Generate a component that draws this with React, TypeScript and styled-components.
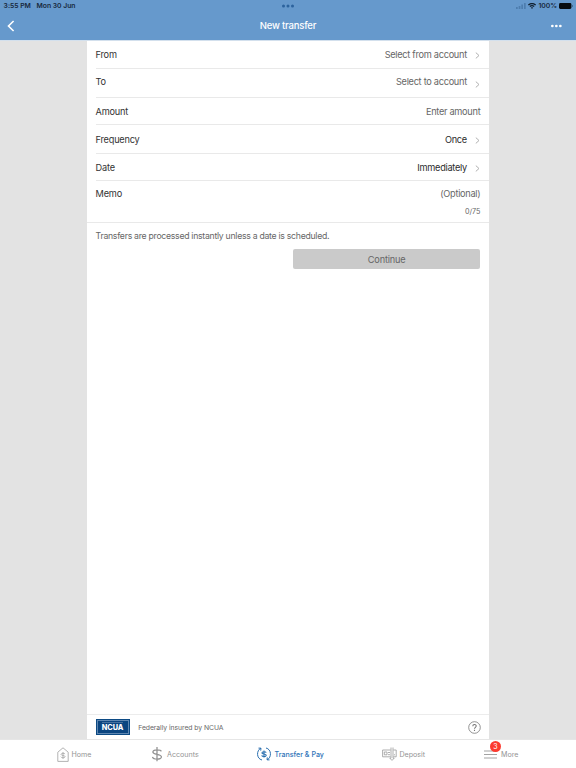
import React from "react";
import styled, { createGlobalStyle } from "styled-components";

const GlobalStyle = createGlobalStyle`
  * { box-sizing: border-box; }
  body { margin: 0; background: #e3e3e3; font-family: Inter, "Liberation Sans", sans-serif; }
  svg { display: block; flex: none; }
`;

const Screen = styled.div`
  width: 576px;
  height: 768px;
  display: flex;
  flex-direction: column;
  background: #e3e3e3;
  overflow: hidden;
`;

const Header = styled.header`
  height: 41px;
  flex: none;
  background: #6699cc;
  border-bottom: 1px solid #d3e0ed;
`;

const StatusBar = styled.div`
  height: 12px;
  display: grid;
  grid-template-columns: 1fr auto 1fr;
  align-items: center;
  padding: 0 3px 0 3.6px;
  color: #17283c;
`;

const StatusText = styled.span`
  font-size: 6.8px;
  line-height: 12px;
  font-weight: 600;
  letter-spacing: -0.02px;
  white-space: nowrap;
`;

const StatusGroup = styled.div<{ $end?: boolean; $gap: number }>`
  display: flex;
  align-items: center;
  gap: ${(p) => p.$gap}px;
  justify-content: ${(p) => (p.$end ? "flex-end" : "flex-start")};
`;

const NavBar = styled.div`
  height: 28px;
  display: grid;
  grid-template-columns: 60px 1fr 60px;
  align-items: center;
  padding: 0 14px 0 7px;
`;

const NavTitle = styled.h1`
  margin: 0;
  padding-left: 7px;
  text-align: center;
  color: #fff;
  font-size: 9.5px;
  line-height: 12px;
  font-weight: 500;
  letter-spacing: -0.2px;
`;

const NavEnd = styled.div`
  display: flex;
  justify-content: flex-end;
`;

const Body = styled.main`
  flex: 1;
  width: 402.8px;
  margin-left: 86.6px;
  background: #fff;
  display: flex;
  flex-direction: column;
`;

const Row = styled.div<{ $height: number; $top: number; $last?: boolean }>`
  height: ${(p) => p.$height}px;
  margin-left: ${(p) => (p.$last ? 0 : 9)}px;
  padding: ${(p) => p.$top}px 9px 0 ${(p) => (p.$last ? 9 : 0)}px;
  border-bottom: 1px solid #e9e9e9;
  display: flex;
  justify-content: space-between;
  align-items: flex-start;
`;

const Label = styled.span`
  font-size: 9.2px;
  line-height: 12px;
  letter-spacing: -0.22px;
  color: #333;
`;

const Value = styled.div<{ $dark?: boolean }>`
  display: flex;
  font-size: 9.2px;
  line-height: 12px;
  letter-spacing: -0.28px;
  color: ${(p) => (p.$dark ? "#2b2b2b" : "#666")};
`;

const ChevronBox = styled.span<{ $drop: number }>`
  padding: ${(p) => p.$drop}px 0 0 8px;
  width: 13.5px;
`;

const MemoValue = styled.div`
  display: flex;
  flex-direction: column;
  align-items: flex-end;
  gap: 7px;
`;

const Counter = styled.span`
  font-size: 7.2px;
  line-height: 10px;
  color: #666;
`;

const Note = styled.p`
  margin: 7px 9px 0;
  font-size: 8.7px;
  line-height: 12px;
  letter-spacing: -0.28px;
  color: #666;
  white-space: nowrap;
`;

const ContinueButton = styled.button`
  align-self: flex-end;
  width: 187.6px;
  height: 20px;
  margin: 7.4px 9px 0 0;
  padding: 0;
  border: 0;
  border-radius: 2px;
  background: #cacaca;
  color: #666;
  font: 400 9.2px/21px Inter, sans-serif;
  letter-spacing: -0.2px;
`;

const Insurance = styled.footer`
  margin-top: auto;
  height: 25px;
  border-top: 1px solid #ececec;
  display: flex;
  align-items: center;
  padding: 0 8.6px 0 9px;
`;

const InsuranceText = styled.span`
  margin-left: 8.6px;
  flex: 1;
  font-size: 6.8px;
  letter-spacing: -0.05px;
  color: #666;
`;

const NcuaBadge = styled.div`
  width: 34px;
  height: 16px;
  padding: 1px;
  background: #0c4a84;
`;

const NcuaFrame = styled.div`
  height: 14px;
  border: 1px solid #5f87b1;
  background: #0b4580;
  color: #fff;
  display: flex;
  flex-direction: column;
  align-items: center;
`;

const NcuaName = styled.span`
  font-size: 7.3px;
  line-height: 8px;
  font-weight: 800;
`;

const NcuaRule = styled.span`
  width: 21px;
  height: 1px;
  margin: 1px 0;
  background: #47709d;
`;

const TabBar = styled.nav`
  height: 29px;
  flex: none;
  border-top: 1px solid #e6e6e6;
  background: #fff;
  display: grid;
  grid-template-columns: 95px 105px 125px 102px 1fr;
  padding-left: 57px;
`;

const Tab = styled.a<{ $active?: boolean; $gap: number }>`
  display: flex;
  align-items: center;
  gap: ${(p) => p.$gap}px;
  height: 28px;
  font-size: 7.1px;
  font-weight: ${(p) => (p.$active ? 500 : 400)};
  color: ${(p) => (p.$active ? "#2f74b8" : "#949494")};
  white-space: nowrap;
`;

const IconHolder = styled.span`
  position: relative;
`;

const Count = styled.span`
  position: absolute;
  left: 6px;
  top: -8.5px;
  width: 11px;
  height: 11px;
  border-radius: 50%;
  background: #fc3b30;
  color: #fff;
  text-align: center;
  font-size: 7px;
  line-height: 11px;
`;

const Chevron = () => (
  <svg width="5" height="7" viewBox="0 0 5 7" fill="none" stroke="#a8a8a8" strokeWidth="0.9">
    <path d="M0.8 0.6 4 3.5 0.8 6.4" />
  </svg>
);

const Dots = ({ color, step, r }: { color: string; step: number; r: number }) => (
  <svg width={step * 2 + r * 2} height="4" fill={color}>
    {[0, 1, 2].map((i) => (
      <circle key={i} cx={r + i * step} cy="2" r={r} />
    ))}
  </svg>
);

const dollar = "M3 -2C2.6 -3.4 -2.9 -3.6 -2.9 -1.5C-2.9 .6 3.1 -.4 3.1 1.9C3.1 4.1 -2.8 4 -3.2 1.9M0 -5V5";

const HomeIcon = () => (
  <svg width="12" height="15" viewBox="0 0 12 15" fill="none" stroke="#aaa" strokeWidth="0.9">
    <path d="M.8 5.2 6 .8 11.2 5.2V14.4H.8Z" />
    <path d={dollar} transform="translate(6 8.4) scale(.68)" strokeWidth="1.3" />
  </svg>
);

const AccountsIcon = () => (
  <svg width="10" height="15" viewBox="0 0 10 15" fill="none" stroke="#929292" strokeWidth="0.9">
    <path d={dollar} transform="translate(5 7.2) scale(1.42)" />
  </svg>
);

const TransferIcon = () => (
  <svg width="14" height="14" viewBox="0 0 14 14" fill="none" stroke="#286eaf" strokeWidth="1">
    <path d="M5 13C-.7 11.8-.7 3.3 3.8 1.3M1.5 1.1 4 1.2 3.7 3.6M9 1C14.7 2.2 14.7 10.7 10.2 12.7M12.5 12.9 10 12.8 10.3 10.4" />
    <path d={dollar} transform="translate(7 7) scale(.72)" strokeWidth="1.5" />
  </svg>
);

const DepositIcon = () => (
  <svg width="15" height="14" viewBox="0 0 15 14" fill="none" stroke="#999" strokeWidth="0.8">
    <path d="M8.6 9.8H.6V3H8.6M11.4 3H14.2V9.8H11.4M2.3 5H5V7.8H2.3ZM6 5.5H8M6 7.7H8M9 .5V11.2H7.8L10 13.4 12.2 11.2H11V.5M12 7.8H13" />
  </svg>
);

const MenuIcon = () => (
  <svg width="13" height="9" viewBox="0 0 13 9" stroke="#999" strokeWidth="0.9">
    <path d="M0 1H13M0 4.5H13M0 8H13" />
  </svg>
);

const rows = [
  { label: "From", value: "Select from account", height: 28, top: 7.6, chevron: 3 },
  { label: "To", value: "Select to account", height: 29, top: 6.5, chevron: 5 },
  { label: "Amount", value: "Enter amount", height: 27, top: 8 },
  { label: "Frequency", value: "Once", height: 29, top: 8.6, chevron: 3 , dark: true },
  { label: "Date", value: "Immediately", height: 27, top: 7.6, chevron: 3, dark: true },
];

export default function App() {
  return (
    <Screen>
      <GlobalStyle />
      <Header>
        <StatusBar>
          <StatusGroup $gap={5.7}>
            <StatusText>3:55 PM</StatusText>
            <StatusText>Mon 30 Jun</StatusText>
          </StatusGroup>
          <Dots color="#2c639d" step={4.5} r={1.5} />
          <StatusGroup $end $gap={2}>
            <svg width="10" height="6" fill="#4d7dae">
              <rect y="4" width="1.7" height="2" />
              <rect x="2.7" y="3" width="1.7" height="3" />
              <rect x="5.3" y="1.5" width="1.7" height="4.5" />
              <rect x="8" width="1.7" height="6" />
            </svg>
            <svg width="8" height="6" viewBox="0 0 8 6" fill="none" stroke="#10202f" strokeWidth="1.3">
              <path d="M.4 2.1Q4-1 7.6 2.1M1.8 3.6Q4 1.8 6.2 3.6" />
              <path d="M2.9 4.6Q4 3.8 5.1 4.6L4 5.9Z" fill="#10202f" stroke="none" />
            </svg>
            <StatusText>100%</StatusText>
            <svg width="14" height="6" viewBox="0 0 14 6">
              <rect width="12.4" height="6" rx="1.4" fill="#080d12" />
              <rect x="12.9" y="2" width="0.8" height="2" fill="#365a7f" />
            </svg>
          </StatusGroup>
        </StatusBar>
        <NavBar>
          <svg width="8" height="12" viewBox="0 0 8 12" fill="none" stroke="#fff" strokeWidth="1.6">
            <path d="M6.6 1 1.5 6 6.6 11" />
          </svg>
          <NavTitle>New transfer</NavTitle>
          <NavEnd>
            <Dots color="#fff" step={4} r={1.35} />
          </NavEnd>
        </NavBar>
      </Header>
      <Body>
        {rows.map((r) => (
          <Row key={r.label} $height={r.height} $top={r.top}>
            <Label>{r.label}</Label>
            <Value $dark={r.dark}>
              {r.value}
              {r.chevron !== undefined && (
                <ChevronBox $drop={r.chevron}>
                  <Chevron />
                </ChevronBox>
              )}
            </Value>
          </Row>
        ))}
        <Row $height={42} $top={7} $last>
          <Label>Memo</Label>
          <MemoValue>
            <Value>(Optional)</Value>
            <Counter>0/75</Counter>
          </MemoValue>
        </Row>
        <Note>Transfers are processed instantly unless a date is scheduled.</Note>
        <ContinueButton>Continue</ContinueButton>
        <Insurance>
          <NcuaBadge>
            <NcuaFrame>
              <NcuaRule />
              <NcuaName>NCUA</NcuaName>
            </NcuaFrame>
          </NcuaBadge>
          <InsuranceText>Federally insured by NCUA</InsuranceText>
          <svg width="13" height="13" viewBox="0 0 13 13" fill="none" stroke="#777" strokeWidth="0.8">
            <circle cx="6.5" cy="6.5" r="5.8" />
            <path d="M4.8 5.2C4.8 3 8.2 3 8.2 5.1C8.2 6.4 6.5 6.3 6.5 7.8M6.5 8.8V9.9" strokeWidth="1.1" />
          </svg>
        </Insurance>
      </Body>
      <TabBar>
        <Tab $gap={2.5}><HomeIcon />Home</Tab>
        <Tab $gap={5}><AccountsIcon />Accounts</Tab>
        <Tab $gap={3.5} $active><TransferIcon />Transfer &amp; Pay</Tab>
        <Tab $gap={2.5}><DepositIcon />Deposit</Tab>
        <Tab $gap={4}>
          <IconHolder>
            <MenuIcon />
            <Count>3</Count>
          </IconHolder>
          More
        </Tab>
      </TabBar>
    </Screen>
  );
}
